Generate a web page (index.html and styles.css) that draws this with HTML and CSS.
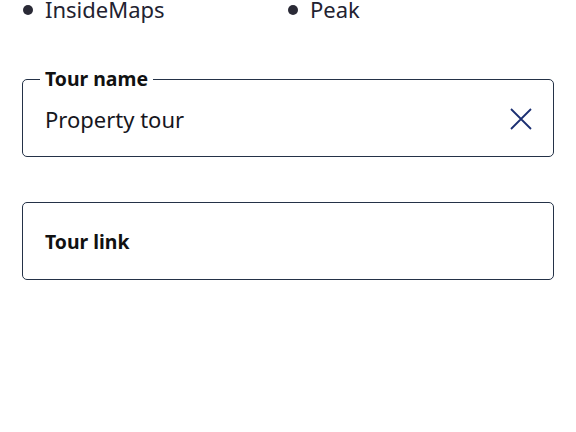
FILE: index.html
```html
<!DOCTYPE html>
<html lang="en">
<head>
  <meta charset="UTF-8" />
  <meta name="viewport" content="width=device-width, initial-scale=1.0"/>
  <title>Tour details</title>
  <link rel="stylesheet" href="styles.css">
</head>
<body>
  <ul class="providers">
    <li>InsideMaps</li>
    <li>Peak</li>
  </ul>

  <fieldset class="field field-filled">
    <legend>Tour name</legend>
    <div class="field-row">
      <input type="text" id="tour-name" value="Property tour" />
      <button class="clear-btn" aria-label="Clear">
        <svg width="22" height="22" viewBox="0 0 22 22">
          <path d="M1 1 L21 21 M21 1 L1 21" stroke="#1b2f72" stroke-width="1.8" fill="none" />
        </svg>
      </button>
    </div>
  </fieldset>

  <div class="field field-empty">
    <label for="tour-link">Tour link</label>
  </div>
</body>
</html>
```

FILE: styles.css
```css
* {
  box-sizing: border-box;
}

body {
  margin: 0;
  padding: 0 22px;
  background-color: #fff;
  color: #16161d;
  font-family: 'Noto Sans', sans-serif;
}

.providers {
  list-style: none;
  margin: -3px 0 0;
  padding: 0;
  display: grid;
  grid-template-columns: 1fr 1fr;
  font-size: 22px;
  line-height: 24px;
  color: #222230;
}

.providers li {
  display: flex;
  align-items: center;
  gap: 12px;
}

.providers li::before {
  content: '';
  width: 10px;
  height: 10px;
  border-radius: 50%;
  background-color: #2a2a36;
  margin: 2px 0 0 1px;
}

.providers li:nth-child(2)::before {
  margin-left: 0;
}

.field {
  border: 1.5px solid #243247;
  border-radius: 5px;
  margin: 0;
  min-width: 0;
}

.field-filled {
  margin-top: 46px;
  padding: 0 21px 0 17px;
  height: 90px;
}

.field-filled legend {
  font-size: 19.4px;
  font-weight: bold;
  line-height: 24px;
  padding: 0 5px;
  color: #111;
}

.field-row {
  display: flex;
  align-items: center;
  height: 63px;
  padding-left: 5px;
  padding-bottom: 7px;
}

.field-row input {
  flex: 1;
  min-width: 0;
  border: none;
  outline: none;
  padding: 0;
  font-family: inherit;
  font-size: 22px;
  color: #16161d;
  background: transparent;
}

.clear-btn {
  border: none;
  background: none;
  padding: 0;
  cursor: pointer;
  display: flex;
}

.field-empty {
  margin-top: 45px;
  height: 78px;
  padding: 0 22px;
  display: flex;
  align-items: center;
}

.field-empty label {
  font-size: 19.4px;
  font-weight: bold;
  color: #111;
}
```
